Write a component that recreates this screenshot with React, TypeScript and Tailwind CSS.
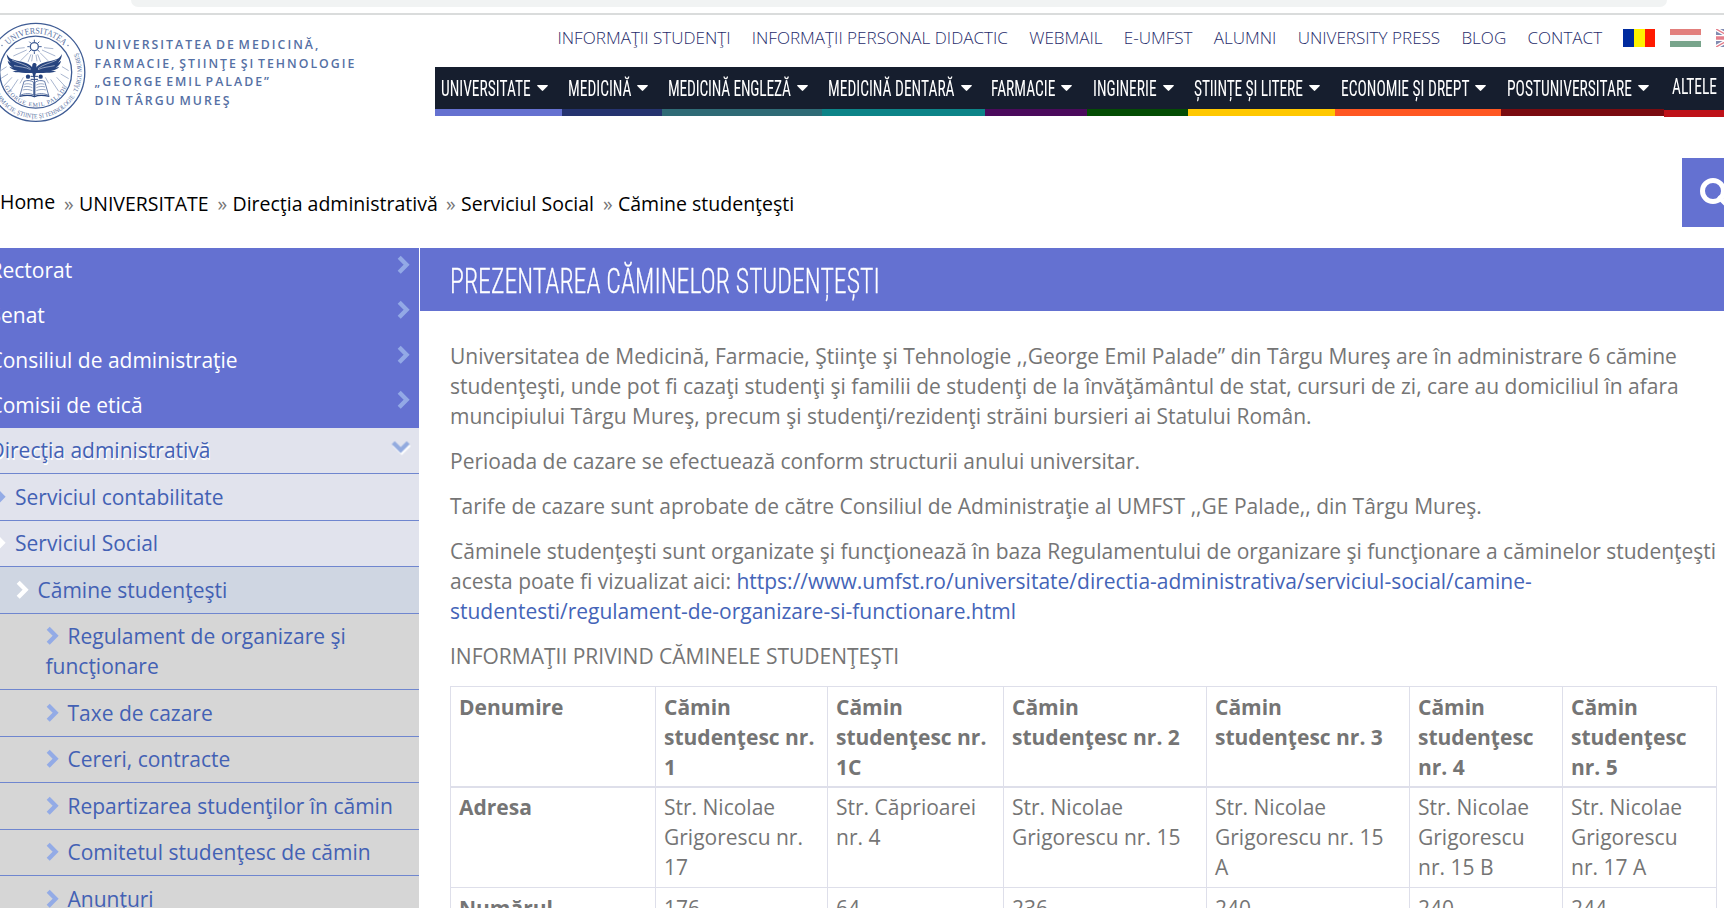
import type { ReactNode } from 'react';

const quickLinks = [
  'INFORMAŢII STUDENŢI',
  'INFORMAŢII PERSONAL DIDACTIC',
  'WEBMAIL',
  'E-UMFST',
  'ALUMNI',
  'UNIVERSITY PRESS',
  'BLOG',
  'CONTACT',
];

const faculties = [
  { label: 'UNIVERSITATE', box: 'w-[127px] border-[#6571d0]' },
  { label: 'MEDICINĂ', box: 'w-[100px] border-[#25336f]' },
  { label: 'MEDICINĂ ENGLEZĂ', box: 'w-[160px] border-[#2f6b76] tracking-[-0.180px]' },
  { label: 'MEDICINĂ DENTARĂ', box: 'w-[163px] border-[#0d8488]' },
  { label: 'FARMACIE', box: 'w-[102px] border-[#4b0a5c]' },
  { label: 'INGINERIE', box: 'w-[101px] border-[#044d04]' },
  { label: 'ȘTIINȚE ȘI LITERE', box: 'w-[147px] border-[#ffc800] tracking-[-0.120px]' },
  { label: 'ECONOMIE ȘI DREPT', box: 'w-[166px] border-[#ff5722]' },
  { label: 'POSTUNIVERSITARE', box: 'w-[163px] border-[#7a0b10]' },
];

const columns = [
  { name: 'Cămin studenţesc nr. 1', address: 'Str. Nicolae Grigorescu nr. 17', places: '176' },
  { name: 'Cămin studenţesc nr. 1C', address: 'Str. Căprioarei nr. 4', places: '64' },
  { name: 'Cămin studenţesc nr. 2', address: 'Str. Nicolae Grigorescu nr. 15', places: '236' },
  { name: 'Cămin studenţesc nr. 3', address: 'Str. Nicolae Grigorescu nr. 15 A', places: '240' },
  { name: 'Cămin studenţesc nr. 4', address: 'Str. Nicolae Grigorescu nr. 15 B', places: '240' },
  { name: 'Cămin studenţesc nr. 5', address: 'Str. Nicolae Grigorescu nr. 17 A', places: '244' },
];

function Seal() {
  return (
    <svg className="block h-[102px] w-[88px] shrink-0" viewBox="0 21 88 102" fill="none" stroke="#3f5c94">
      <defs>
        <path id="arcTop" d="M-2.9 72.3 A38.7 38.7 0 0 1 74.5 72.3" />
        <path id="arcOuter" d="M-10.1 72.3 A45.9 45.9 0 0 0 81.7 72.3 A45.9 45.9 0 0 0 35.8 26.4" />
        <path id="arcInner" d="M1.4 72.3 A34.4 34.4 0 0 0 70.2 72.3" />
      </defs>
      <circle cx="35.8" cy="72.3" r="49" strokeWidth="1.3" />
      <circle cx="35.7" cy="72.2" r="36" strokeWidth="1.3" />
      <g fill="#5a73a4" stroke="none" className="[font-family:'Liberation_Serif',serif]">
        <text fontSize="8.8">
          <textPath href="#arcTop" startOffset="30" textLength="62" lengthAdjust="spacingAndGlyphs">UNIVERSITATEA</textPath>
        </text>
        <text fontSize="6.4">
          <textPath href="#arcOuter" startOffset="20" textLength="144" lengthAdjust="spacingAndGlyphs">FARMACIE, ŞTIINŢE ŞI TEHNOLOGIE · TÂRGU MUREŞ</textPath>
        </text>
        <text fontSize="6">
          <textPath href="#arcInner" startOffset="15" textLength="78">GEORGE EMIL PALADE</textPath>
        </text>
        <circle cx="2" cy="45.5" r=".7" />
        <circle cx="68" cy="45.5" r=".7" />
      </g>
      <g transform="scale(.33333)">
        <circle cx="103" cy="140" r="12" strokeWidth="4" />
        <path
          strokeWidth="3"
          d="M103 119v7M103 154v8M82 140h7M117 140h8M88 125l5 5M118 125l-5 5M88 155l5-5M118 155l-5-5"
        />
        <path
          strokeWidth="1.8"
          opacity=".75"
          d="M93 163L84 186M86 158L62 182M80 150L40 168M74 143L46 146M113 163L122 186M120 158L144 182M126 150L166 168M132 143L160 146M98 164L95 184M108 164L111 184M20 200L2 212M24 222L2 236M36 232L8 262M54 238L30 274M70 232L60 250M186 200L206 212M182 222L206 236M170 232L198 262M152 238L176 274M136 232L146 250"
        />
        <g fill="#27447f" stroke="none">
          <path d="M20 162c7 14 17 17 31 20 20 4 40 9 49 24l3 14c-18-3-44 2-66-6l16-2c-13-2-20-5-25-12l11 3c-10-6-15-13-16-21l9 7c-8-9-11-17-12-27z" />
          <path d="M186 162c-7 14-17 17-31 20-20 4-40 9-49 24l-3 14c18-3 44 2 66-6l-16-2c13-2 20-5 25-12l-11 3c10-6 15-13 16-21l-9 7c8-9 11-17 12-27z" />
          <path d="M97 194c1-6 10-7 12-1l1 18-6 22h-3l-6-22z" />
          <circle cx="84" cy="230" r="6.500" />
          <circle cx="122" cy="230" r="6.500" />
        </g>
        <path stroke="#fff" strokeWidth="1.500" d="M36 180c18 10 40 12 56 26M42 197c18 4 34 4 50 12M170 180c-18 10-40 12-56 26M164 197c-18 4-34 4-50 12" />
        <path stroke="#27447f" strokeWidth="3" d="M103 228v60M92 229h22M92 238h22" />
        <path strokeWidth="2.400" d="M72 244c10-4 22-3 29 3v38c-11-6-27-5-41 1zM134 244c-10-4-22-3-29 3v38c11-6 27-5 41 1z" />
        <path strokeWidth="1.600" d="M73 253c8-3 17-2 24 2M71 261c8-3 18-2 26 2M68 270c9-3 20-2 29 2M133 253c-8-3-17-2-24 2M135 261c-8-3-18-2-26 2M138 270c-9-3-20-2-29 2" />
        <path stroke="#27447f" strokeWidth="4" d="M58 289c14-3 34-4 45 1 11-5 31-4 45-1" />
      </g>
    </svg>
  );
}

function Caret() {
  return (
    <svg className="h-[6px] w-[11px] shrink-0" viewBox="0 0 11 6" fill="#fff">
      <path d="M.7 0h9.600q.9.200.4.900L6.200 5.600q-.7.600-1.400 0L.3.900Q-.2.200.7 0z" />
    </svg>
  );
}

function Chevron({ className }: { className: string }) {
  return (
    <svg className={className} viewBox="0 0 13 20" fill="none" stroke="currentColor" strokeWidth="4.300">
      <path d="M2.200 2.200L9.600 9.700L2.200 17.200" />
    </svg>
  );
}

function TopItem({ children }: { children: ReactNode }) {
  return (
    <li className="flex h-[45px] justify-between bg-[#6471d1] pl-[13.500px] pr-[9px] pt-[7px] text-white">
      <span>{children}</span>
      <Chevron className="h-[20px] w-[13px] text-[#93a9e6]" />
    </li>
  );
}

function SubItem({ children, tone, icon }: { children: ReactNode; tone: string; icon: string }) {
  return (
    <li className={'border-b border-[#6f86cf] py-[7.750px] pr-[10px] text-[#4361b4] ' + tone}>
      <Chevron className={'mr-[9px] inline-block h-[20px] w-[13px] align-[-2px] ' + icon} />
      {children}
    </li>
  );
}

function Crumb({ children, className }: { children: ReactNode; className: string }) {
  return (
    <span className={className}>
      <span className="inline-block w-[15px] text-[#777]">»</span>
      {children}
    </span>
  );
}

export default function App() {
  return (
    <div className="flex h-[908px] w-[1724px] flex-col overflow-hidden bg-white [font-family:'Open_Sans',sans-serif]">
      <div className="h-[15px] shrink-0 border-b-2 border-[#dadcdc]">
        <div className="ml-[131px] h-[7px] w-[1536px] rounded-b-[8px] bg-[#f1f3f3]" />
      </div>

      <header className="flex h-[143px] shrink-0">
        <div className="flex w-[435px] shrink-0 pt-[6px]">
          <Seal />
          <div className="whitespace-nowrap pl-[6.500px] pt-[15px] text-[12.300px] font-semibold leading-[18.700px] tracking-[2.020px] text-[#5570a4] [word-spacing:-2.500px]">
            <p>UNIVERSITATEA DE MEDICINĂ,</p>
            <p>FARMACIE, ŞTIINŢE ŞI TEHNOLOGIE</p>
            <p>„GEORGE EMIL PALADE”</p>
            <p>DIN TÂRGU MUREŞ</p>
          </div>
        </div>
        <div className="w-[1289px] overflow-hidden">
          <div className="flex h-[52px] pl-[122.500px] pt-[10.600px]">
            <ul className="flex gap-[21.200px] whitespace-nowrap text-[17.080px] font-light leading-[24px] text-[#1f2c6b]">
              {quickLinks.map((link) => (
                <li key={link}>{link}</li>
              ))}
            </ul>
            <div className="ml-[21px] flex shrink-0 gap-[15px] pt-[3.400px]">
              <div className="flex h-[18px] w-[32px]">
                <i className="flex-1 bg-[#002b9f]" />
                <i className="flex-1 bg-[#fff200]" />
                <i className="flex-1 bg-[#ff1a00]" />
              </div>
              <div className="h-[18px] w-[31px]">
                <div className="h-[6px] bg-[#e27f7c]" />
                <div className="h-[6px] bg-[#f8f8f8]" />
                <div className="h-[6px] bg-[#78a48b]" />
              </div>
              <svg className="h-[18px] w-[32px] opacity-55" viewBox="0 0 32 18">
                <path fill="#1b2d72" d="M0 0h32v18H0z" />
                <path stroke="#fff" strokeWidth="4" d="M0 0l32 18M32 0L0 18" />
                <path stroke="#cf142b" strokeWidth="1.500" d="M0 0l32 18M32 0L0 18" />
                <path stroke="#fff" strokeWidth="6" d="M16 0v18M0 9h32" />
                <path stroke="#cf142b" strokeWidth="3.400" d="M16 0v18M0 9h32" />
              </svg>
            </div>
          </div>
          <nav className="flex text-[15.500px] text-white [font-family:'Roboto_Condensed',Roboto,sans-serif]">
            {faculties.map((item) => (
              <div
                key={item.label}
                className={
                  'flex h-[49px] shrink-0 items-center gap-[6px] whitespace-nowrap border-b-[7px] bg-[#161e2e] pl-[6px] ' +
                  item.box
                }
              >
                <span className="scale-y-[1.390] pt-[1.500px]">{item.label}</span>
                <Caret />
              </div>
            ))}
            <div className="flex h-[50px] w-[100px] shrink-0 items-center gap-[7px] border-b-[7px] border-[#be1118] bg-[#161e2e] pb-[2px] pl-[8px]">
              <span className="scale-y-[1.390] pt-[1px]">ALTELE</span>
              <Caret />
            </div>
          </nav>
        </div>
      </header>

      <div className="flex h-[90px] shrink-0 justify-between">
        <div className="flex whitespace-nowrap pt-[31px] text-[19.500px] leading-[30px] text-black">
          <span className="mt-[-2px] w-[64px]">Home</span>
          <Crumb className="w-[153.500px]">UNIVERSITATE</Crumb>
          <Crumb className="w-[228.500px]">Direcţia administrativă</Crumb>
          <Crumb className="w-[157px]">Serviciul Social</Crumb>
          <Crumb className="">Cămine studenţeşti</Crumb>
        </div>
        <div className="flex h-[69px] w-[42px] overflow-hidden bg-[#6471d1] pl-[18px] pt-[20px]">
          <svg className="h-[34px] w-[34px] shrink-0" viewBox="0 0 34 34" fill="none" stroke="#fff" strokeWidth="5">
            <circle cx="13" cy="13" r="10.500" />
            <path d="M20 20l9 9" strokeLinecap="round" />
          </svg>
        </div>
      </div>

      <div className="flex min-h-0 flex-1">
        <aside className="w-[419px] shrink-0 overflow-hidden">
          <ul className="ml-[-24px] w-[443px] text-[21px] leading-[30px]">
            <TopItem>Rectorat</TopItem>
            <TopItem>Senat</TopItem>
            <TopItem>Consiliul de administraţie</TopItem>
            <TopItem>Comisii de etică</TopItem>
            <li className="flex h-[46px] justify-between border-b border-[#6f86cf] bg-[#e1e3ed] pl-[13.500px] pr-[12px] pt-[6.500px] text-[#4361b4] [text-shadow:1px_2px_0_#fff]">
              <span>Direcţia administrativă</span>
              <Chevron className="mt-[2px] h-[20px] w-[13px] rotate-90 text-[#93abdf] drop-shadow-[2px_-1px_0_#fff]" />
            </li>
            <SubItem tone="bg-[#e1e3ed] pl-[17px]" icon="text-[#93abe6]">Serviciul contabilitate</SubItem>
            <SubItem tone="bg-[#e1e3ed] pl-[17px]" icon="text-white">Serviciul Social</SubItem>
            <SubItem tone="bg-[#cfd6e2] pl-[39.500px]" icon="text-white">Cămine studenţeşti</SubItem>
            <SubItem tone="bg-[#d6d6d6] pl-[69.500px]" icon="text-[#93abe6]">Regulament de organizare şi funcţionare</SubItem>
            <SubItem tone="bg-[#d6d6d6] pl-[69.500px]" icon="text-[#93abe6]">Taxe de cazare</SubItem>
            <SubItem tone="bg-[#d6d6d6] pl-[69.500px]" icon="text-[#93abe6]">Cereri, contracte</SubItem>
            <SubItem tone="bg-[#d6d6d6] pl-[69.500px]" icon="text-[#93abe6]">Repartizarea studenţilor în cămin</SubItem>
            <SubItem tone="bg-[#d6d6d6] pl-[69.500px]" icon="text-[#93abe6]">Comitetul studenţesc de cămin</SubItem>
            <SubItem tone="bg-[#d6d6d6] pl-[69.500px]" icon="text-[#93abe6]">Anunţuri</SubItem>
          </ul>
        </aside>

        <main className="ml-px flex-1 overflow-hidden">
          <h1 className="flex h-[63px] items-center bg-[#6471d1] pl-[30px] pt-[2px] text-[25.800px] font-light leading-[30px] text-white [font-family:'Roboto_Condensed',Roboto,sans-serif] [-webkit-text-stroke:0.200px_#fff]">
            <span className="scale-y-[1.380] whitespace-nowrap">PREZENTAREA CĂMINELOR STUDENȚEȘTI</span>
          </h1>
          <div className="space-y-[15px] whitespace-nowrap pl-[30px] pt-[30px] text-[21px] leading-[30px] text-[#757575]">
            <p>
              Universitatea de Medicină, Farmacie, Ştiinţe şi Tehnologie ,,George Emil Palade” din Târgu Mureş are în
              administrare 6 cămine
              <br />
              studenţeşti, unde pot fi cazaţi studenţi şi familii de studenţi de la învăţământul de stat, cursuri de zi,
              care au domiciliul în afara
              <br />
              muncipiului Târgu Mureş, precum şi studenţi/rezidenţi străini bursieri ai Statului Român.
            </p>
            <p>Perioada de cazare se efectuează conform structurii anului universitar.</p>
            <p>Tarife de cazare sunt aprobate de către Consiliul de Administraţie al UMFST ,,GE Palade,, din Târgu Mureş.</p>
            <p>
              Căminele studenţeşti sunt organizate şi funcţionează în baza Regulamentului de organizare şi funcţionare a
              căminelor studenţeşti
              <br />
              acesta poate fi vizualizat aici:{' '}
              <a className="text-[#4464b8]">
                https://www.umfst.ro/universitate/directia-administrativa/serviciul-social/camine-
                <br />
                studentesti/regulament-de-organizare-si-functionare.html
              </a>
            </p>
            <p>INFORMAŢII PRIVIND CĂMINELE STUDENŢEŞTI</p>
          </div>
          <table className="ml-[30px] mt-[15px] w-[1267px] table-fixed border-collapse text-left text-[21px] leading-[30px] text-[#757575] [&_td]:border [&_td]:border-[#dedfea] [&_td]:px-[8px] [&_td]:align-top">
            <colgroup>
              <col className="w-[205px]" />
              <col className="w-[172px]" />
              <col className="w-[176px]" />
              <col className="w-[203px]" />
              <col className="w-[203px]" />
              <col className="w-[153px]" />
              <col className="w-[154px]" />
            </colgroup>
            <tbody>
              <tr className="border-b-2 border-[#dedfea] font-bold [&_td]:pb-[4px] [&_td]:pt-[5px]">
                <td>Denumire</td>
                {columns.map((c) => (
                  <td key={c.name}>{c.name}</td>
                ))}
              </tr>
              <tr className="[&_td]:pb-[5px] [&_td]:pt-[4px]">
                <td className="font-bold">Adresa</td>
                {columns.map((c) => (
                  <td key={c.name}>{c.address}</td>
                ))}
              </tr>
              <tr className="[&_td]:py-[5px]">
                <td className="font-bold">Numărul</td>
                {columns.map((c) => (
                  <td key={c.name}>{c.places}</td>
                ))}
              </tr>
            </tbody>
          </table>
        </main>
      </div>
    </div>
  );
}
